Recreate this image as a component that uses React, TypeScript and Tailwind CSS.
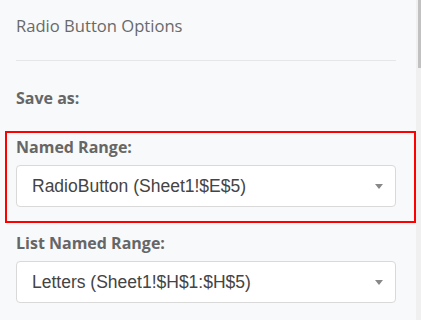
export default function App() {
  return (
    <div className="flex h-[320px] w-[421px] overflow-hidden bg-[#f8f9fa] font-['Open_Sans',sans-serif]">
      <div className="flex-1">
        <div className="px-4 pt-[14px]">
          <h2 className="text-[16.6px] leading-[24px] text-[#696969]">Radio Button Options</h2>
          <div className="mt-[22px] h-px w-[380px] bg-[#e4e6e8]" />
          <div className="mt-[25px] text-[16px] font-bold leading-[24px] text-[#666]">Save as:</div>
        </div>

        <div className="mt-[21px] ml-[5px] w-[411px] border-2 border-[#ff0000] px-[9px] pb-[14px] pt-[2px]">
          <label className="block text-[16px] font-bold leading-[24px] text-[#666]">Named Range:</label>
          <Select value="RadioButton (Sheet1!$E$5)" />
        </div>

        <div className="px-4 pt-[8px]">
          <label className="block text-[16px] font-bold leading-[24px] text-[#666]">List Named Range:</label>
          <Select value="Letters (Sheet1!$H$1:$H$5)" />
        </div>
      </div>

      <div className="flex w-[5px] flex-col bg-[#f0f0f0]">
        <div className="ml-[2px] h-[68px] w-[3px] bg-[#c1c1c1]" />
      </div>
    </div>
  )
}

function Select({ value }: { value: string }) {
  return (
    <div className="mt-[6px] flex h-[42px] w-[380px] items-center justify-between rounded-[4px] border border-[#d9d9d9] bg-white pl-[15px] pr-[8px]">
      <span className="font-['Liberation_Sans',Arial,sans-serif] text-[17.5px] text-[#444]">{value}</span>
      <svg width="12" height="8" viewBox="0 0 12 8" className="mr-[2px]">
        <path d="M2 2 L10 2 L6 7 Z" fill="#888" />
      </svg>
    </div>
  )
}
